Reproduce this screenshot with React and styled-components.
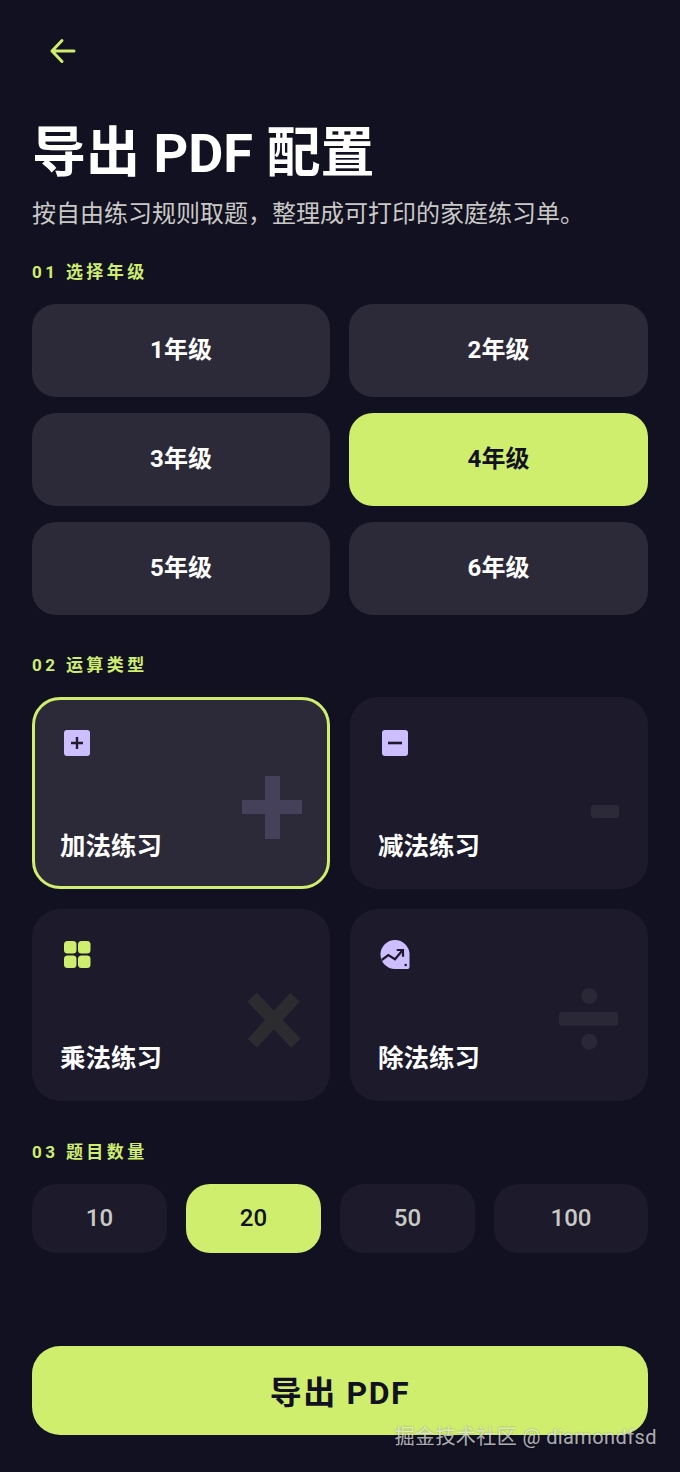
import React from 'react'
import styled, { createGlobalStyle } from 'styled-components'

const GlobalStyle = createGlobalStyle`
  html, body {
    margin: 0;
    padding: 0;
    background: #121121;
  }
  * {
    box-sizing: border-box;
  }
`

const Page = styled.div`
  position: relative;
  width: 680px;
  height: 1472px;
  padding: 0 32px;
  overflow: hidden;
  background: #121121;
  color: #fff;
  font-family: Roboto, 'Noto Sans CJK SC', sans-serif;
`

const BackButton = styled.button`
  display: block;
  width: 64px;
  height: 64px;
  margin: 20px 0 0 0;
  padding: 0 0 0 16px;
  border: 0;
  background: none;
  color: #cfee6e;
  text-align: left;
`

const Title = styled.h1`
  margin: 35px 0 0;
  font-size: 54px;
  line-height: 70px;
  font-weight: 700;
`

const Subtitle = styled.p`
  margin: 7px 0 0;
  font-size: 24px;
  line-height: 36px;
  color: #c9c9c6;
`

const SectionLabel = styled.h2`
  margin: ${props => props.$top}px 0 20px;
  font-size: 17px;
  line-height: 24px;
  font-weight: 700;
  letter-spacing: 3.4px;
  color: #cfee6e;
`

const GradeGrid = styled.div`
  display: grid;
  grid-template-columns: 298px 299px;
  grid-auto-rows: 93px;
  column-gap: 19px;
  row-gap: 16px;
`

const GradeButton = styled.button`
  padding: 0 0 6px;
  border: 0;
  border-radius: 24px;
  font-family: inherit;
  font-size: 24px;
  font-weight: 700;
  color: ${props => (props.$active ? '#121121' : '#fff')};
  background: ${props => (props.$active ? '#cfee6e' : '#2c2938')};
`

const TypeGrid = styled.div`
  display: grid;
  grid-template-columns: 298px 298px;
  grid-auto-rows: 192px;
  column-gap: 20px;
  row-gap: 20px;
`

const TypeCard = styled.div`
  position: relative;
  display: flex;
  flex-direction: column;
  justify-content: space-between;
  padding: ${props => (props.$active ? '26px 25px 22px' : '29px 28px 25px')};
  border: ${props => (props.$active ? '3px solid #cfee6e' : '0')};
  border-radius: 28px;
  background: ${props => (props.$active ? '#2c2938' : '#1c1a2b')};
`

const TypeIcon = styled.div`
  width: 34px;
  height: 34px;
  color: ${props => props.$color};
`

const TypeName = styled.div`
  font-size: 25.5px;
  line-height: 36px;
  font-weight: 700;
`

const Watermark = styled.svg`
  position: absolute;
  right: ${props => props.$right}px;
  top: ${props => props.$top}px;
  width: 64px;
  height: 64px;
`

const CountRow = styled.div`
  display: grid;
  grid-template-columns: 135px 135px 135px 154px;
  column-gap: 19px;
  height: 69px;
`

const CountButton = styled.button`
  padding: 0 0 2px;
  border: 0;
  border-radius: 24px;
  font-family: inherit;
  font-size: 24px;
  font-weight: 500;
  color: ${props => (props.$active ? '#121121' : '#c9c9c6')};
  background: ${props => (props.$active ? '#cfee6e' : '#1c1a2b')};
`

const ExportButton = styled.button`
  display: block;
  width: 616px;
  height: 89px;
  margin-top: 93px;
  padding: 0 0 2px;
  border: 0;
  border-radius: 28px;
  font-family: inherit;
  font-size: 32px;
  font-weight: 700;
  letter-spacing: 1.6px;
  color: #121121;
  background: #cfee6e;
`

const SiteMark = styled.div`
  position: absolute;
  right: 23px;
  top: 1423px;
  font-size: 20px;
  line-height: 28px;
  letter-spacing: 0.4px;
  color: rgba(255, 255, 255, 0.68);
  text-shadow: 0 0 2px rgba(0, 0, 0, 0.35);
`

const ArrowIcon = () => (
  <svg width="30" height="30" viewBox="0 0 30 30" fill="none" stroke="currentColor" strokeWidth="3" strokeLinecap="round" strokeLinejoin="round">
    <path d="M26 15H4M14 4.5 4 15l10 10.5" />
  </svg>
)

const BoxPlus = () => (
  <svg width="34" height="34" viewBox="0 0 34 34">
    <rect x="4" y="4" width="26" height="26" rx="3" fill="currentColor" />
    <path d="M17 11v12M11 17h12" stroke="#1f1d2c" strokeWidth="2.4" />
  </svg>
)

const BoxMinus = () => (
  <svg width="34" height="34" viewBox="0 0 34 34">
    <rect x="4" y="4" width="26" height="26" rx="3" fill="currentColor" />
    <path d="M10 17h14" stroke="#1c1a2b" strokeWidth="2.6" />
  </svg>
)

const Tiles = () => (
  <svg width="34" height="34" viewBox="0 0 34 34" fill="currentColor">
    <rect x="4" y="3" width="12.500" height="12.500" rx="3.500" />
    <rect x="18" y="3" width="12.500" height="12.500" rx="3.500" />
    <rect x="4" y="17.500" width="12.500" height="12.500" rx="3.500" />
    <rect x="18" y="17.500" width="12.500" height="12.500" rx="3.500" />
  </svg>
)

const TrendBubble = () => (
  <svg width="34" height="34" viewBox="0 0 34 34">
    <path d="M17 2a14.500 14.500 0 0 1 14.500 14.500V29a2 2 0 0 1-2 2H17A14.500 14.500 0 0 1 17 2Z" fill="currentColor" />
    <path d="M3.700 22 10.300 17 17 21.300 24.700 12" fill="none" stroke="#1c1a2b" strokeWidth="2.200" />
    <path d="M18.700 12H25V18.700" fill="none" stroke="#1c1a2b" strokeWidth="2.200" />
    <circle cx="27.700" cy="27" r="1.300" fill="#1c1a2b" />
  </svg>
)

const PlusMark = () => (
  <Watermark $right={21} $top={76} viewBox="0 0 64 64" fill="#45415a">
    <path d="M23 0h15v24h22v14H38v25H23V38H0V24h23Z" />
  </Watermark>
)

const MinusMark = () => (
  <Watermark $right={29} $top={85} viewBox="0 0 64 64" fill="#2c2938">
    <rect x="36" y="23" width="28" height="13" rx="3" />
  </Watermark>
)

const TimesMark = () => (
  <Watermark $right={27} $top={80} viewBox="0 0 64 64" fill="none" stroke="#2c2b30" strokeWidth="13">
    <path d="M13 8 57 54.300M56 8.300 13.300 54.300" />
  </Watermark>
)

const DivideMark = () => (
  <Watermark $right={28} $top={78} viewBox="0 0 64 64" fill="#2a2836">
    <rect x="3" y="24.700" width="59" height="14" rx="3" />
    <circle cx="33.300" cy="9" r="8" />
    <circle cx="33.300" cy="54.700" r="8" />
  </Watermark>
)

const grades = ['1年级', '2年级', '3年级', '4年级', '5年级', '6年级']

const types = [
  { name: '加法练习', icon: BoxPlus, mark: PlusMark, color: '#cdbfff', active: true },
  { name: '减法练习', icon: BoxMinus, mark: MinusMark, color: '#cdbfff' },
  { name: '乘法练习', icon: Tiles, mark: TimesMark, color: '#cfee6e' },
  { name: '除法练习', icon: TrendBubble, mark: DivideMark, color: '#cdbfff' }
]

const counts = ['10', '20', '50', '100']

const App = () => (
  <Page>
    <GlobalStyle />
    <BackButton>
      <ArrowIcon />
    </BackButton>
    <Title>导出 PDF 配置</Title>
    <Subtitle>按自由练习规则取题，整理成可打印的家庭练习单。</Subtitle>

    <SectionLabel $top={28}>01 选择年级</SectionLabel>
    <GradeGrid>
      {grades.map(grade => (
        <GradeButton key={grade} $active={grade === '4年级'}>{grade}</GradeButton>
      ))}
    </GradeGrid>

    <SectionLabel $top={38}>02 运算类型</SectionLabel>
    <TypeGrid>
      {types.map(type => (
        <TypeCard key={type.name} $active={type.active}>
          <TypeIcon $color={type.color}>
            <type.icon />
          </TypeIcon>
          <TypeName>{type.name}</TypeName>
          <type.mark />
        </TypeCard>
      ))}
    </TypeGrid>

    <SectionLabel $top={39}>03 题目数量</SectionLabel>
    <CountRow>
      {counts.map(count => (
        <CountButton key={count} $active={count === '20'}>{count}</CountButton>
      ))}
    </CountRow>

    <ExportButton>导出 PDF</ExportButton>
    <SiteMark>掘金技术社区 @ diamondfsd</SiteMark>
  </Page>
)

export default App
